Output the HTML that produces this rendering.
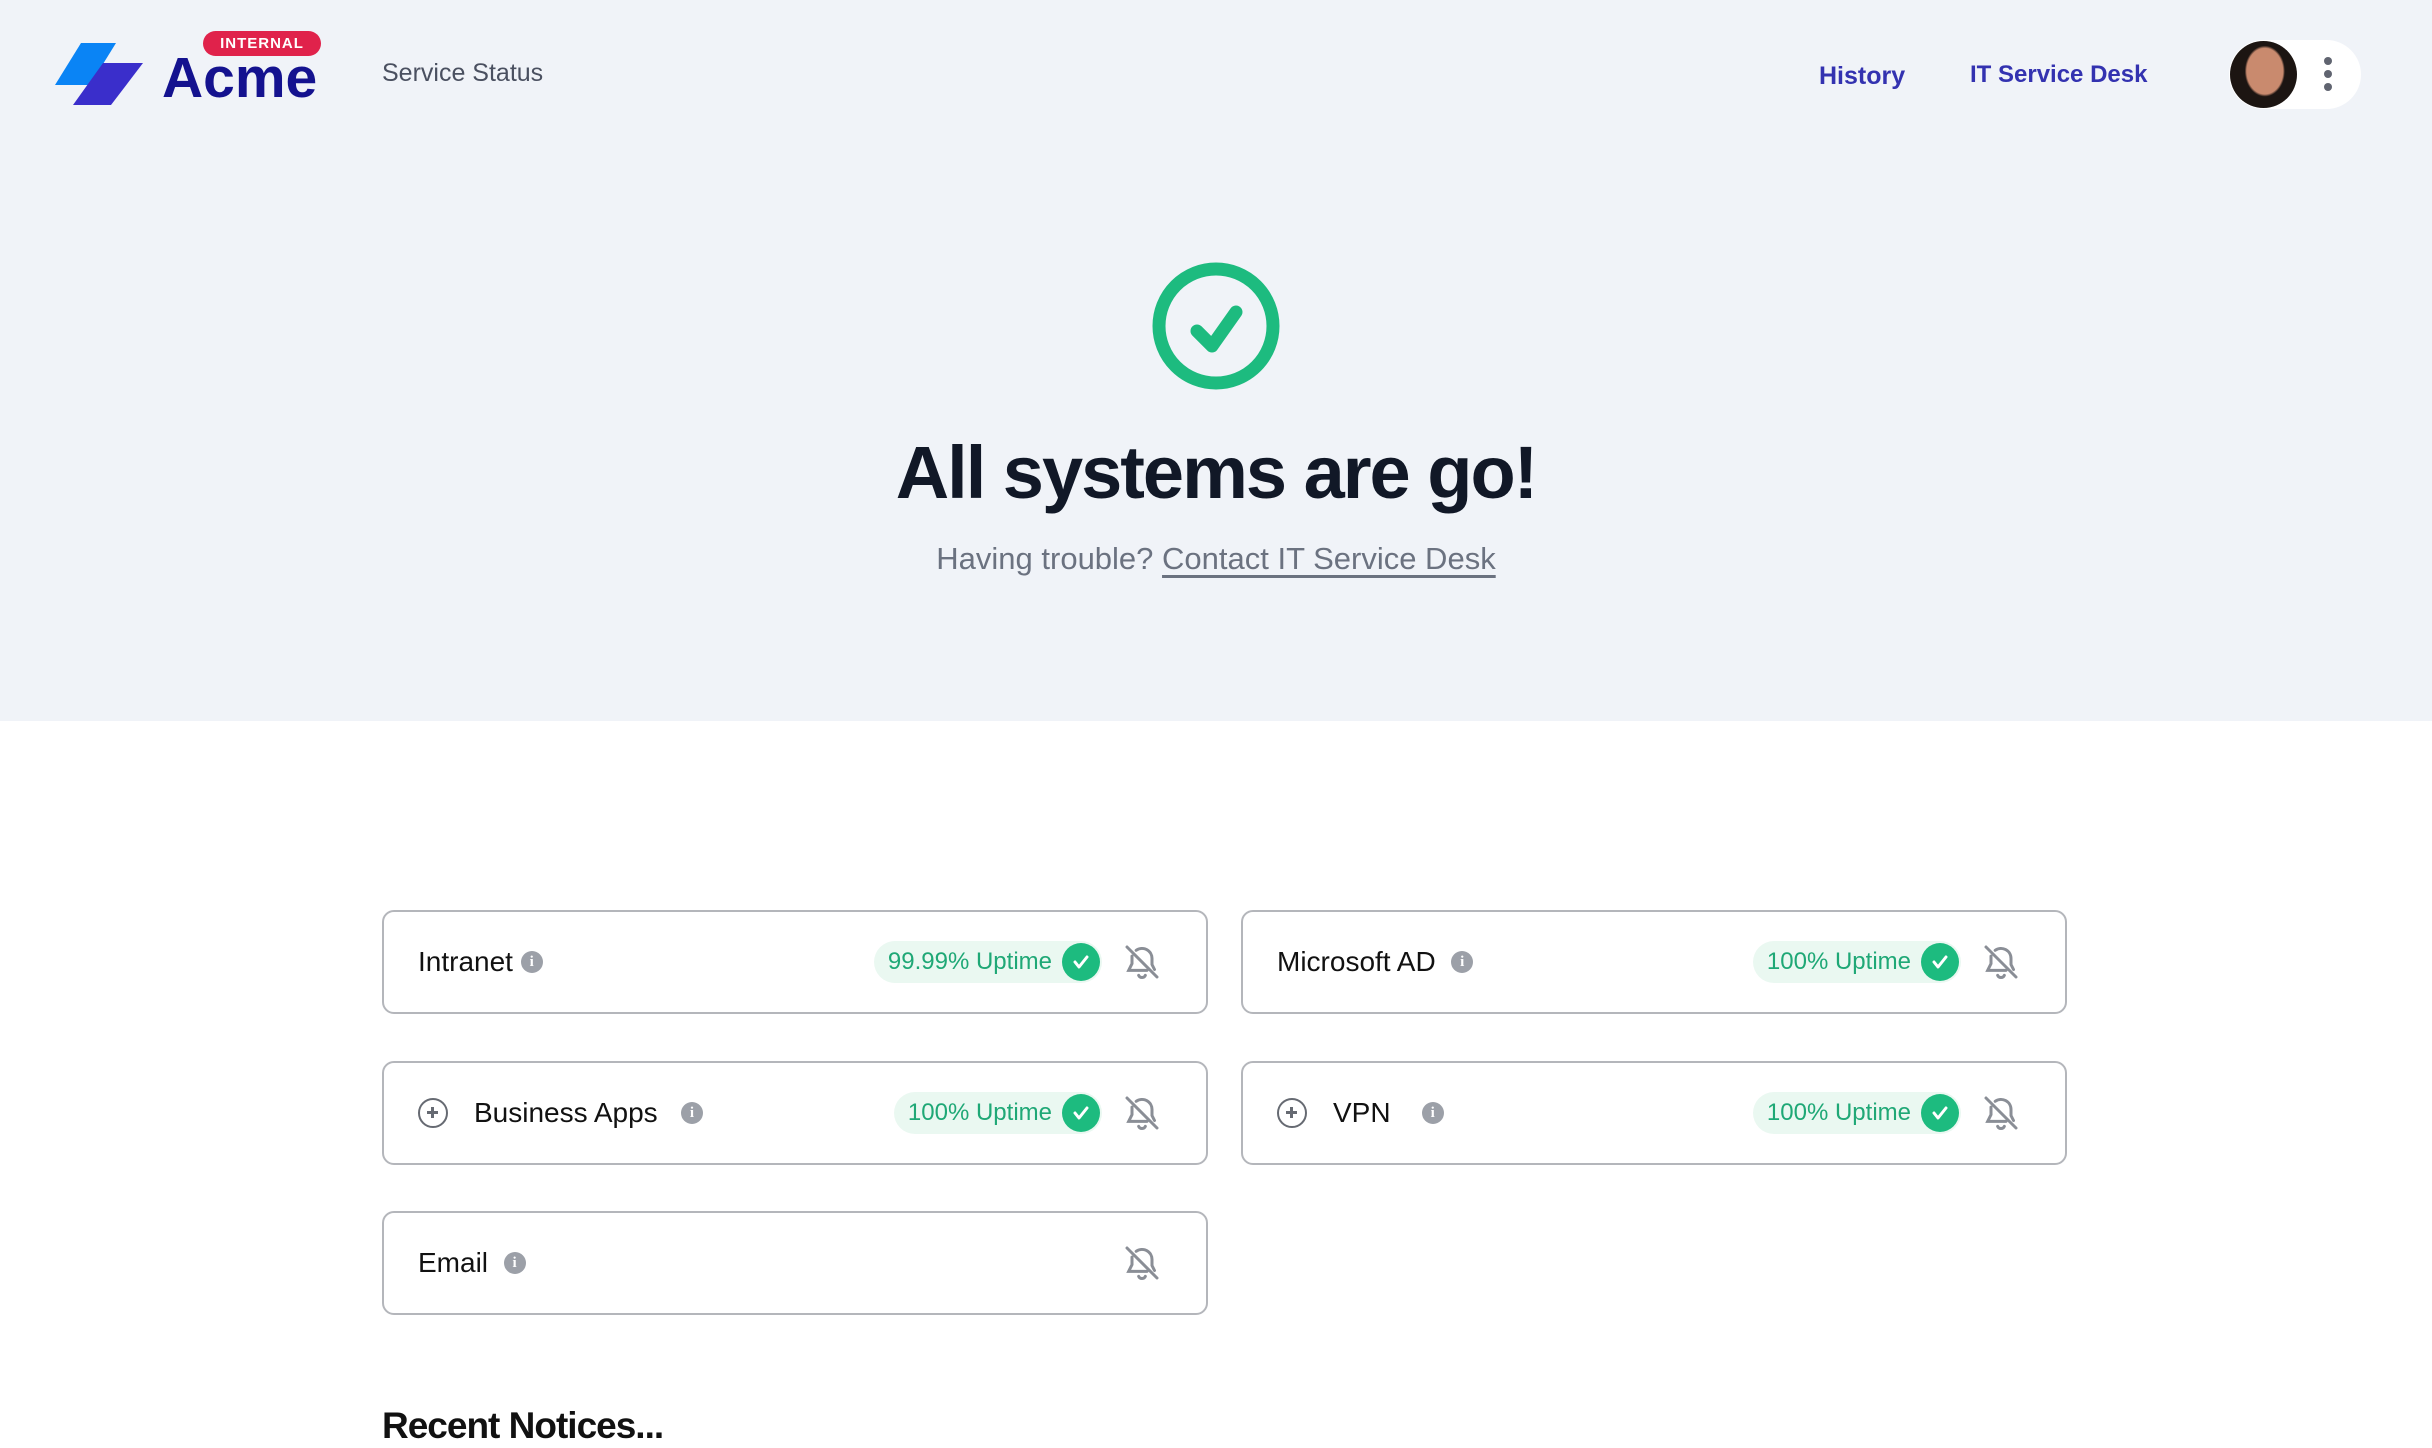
<!DOCTYPE html>
<html><head><meta charset="utf-8"><style>
*{margin:0;padding:0;box-sizing:border-box}
body{width:2432px;height:1448px;overflow:hidden;background:#fff;font-family:"Liberation Sans",sans-serif;position:relative}
.hero{position:absolute;left:0;top:0;width:2432px;height:721px;background:#f0f3f8}
.a{position:absolute}
.card{position:absolute;width:826px;height:104px;border:2px solid #b4b6bb;border-radius:12px;background:#fff}
.name{position:absolute;top:50%;transform:translateY(-50%);font-size:28px;color:#111;display:flex;align-items:center;white-space:nowrap}
.info{display:inline-block;width:22px;height:22px;border-radius:50%;background:#9ca0a8;color:#fff;font-size:15px;font-weight:bold;text-align:center;line-height:22px;font-family:"Liberation Serif",serif}
.pill{position:absolute;top:29px;height:42px;border-radius:21px;background:#eaf8f1;color:#1fa876;font-size:24px;line-height:42px;padding-left:14px;padding-right:50px;white-space:nowrap}
.pill .ck{position:absolute;right:2px;top:2px;width:38px;height:38px;border-radius:50%;background:#1dbb7f}
.bell{position:absolute;top:30px;right:44px;width:40px;height:40px}
.plus{display:inline-block;width:30px;height:30px;border:2.5px solid #666a72;border-radius:50%;position:relative;margin-right:26px}
.plus:before{content:"";position:absolute;left:7px;top:11px;width:11px;height:2.5px;background:#666a72}
.plus:after{content:"";position:absolute;left:11.3px;top:7px;width:2.5px;height:11px;background:#666a72}
</style></head><body>
<div class="hero"></div>
<svg class="a" style="left:0;top:0" width="160" height="120"><polygon points="81,43 116,43 90,85 55,85" fill="#0a84f5"/><polygon points="103,63 143,63 111,105 73,105" fill="#3a2ecb"/></svg>
<div class="a" style="left:203px;top:31px;width:118px;height:25px;border-radius:13px;background:#e0224b;color:#fff;font-size:15px;font-weight:bold;text-align:center;line-height:25px;letter-spacing:1px">INTERNAL</div>
<div class="a" style="left:162px;top:46px;font-size:57px;font-weight:bold;color:#14128f;line-height:64px">Acme</div>
<div class="a" style="left:382px;top:59px;font-size:25px;color:#4a5060">Service Status</div>
<div class="a" style="left:1819px;top:62px;font-size:25px;color:#3332b0;font-weight:bold">History</div>
<div class="a" style="left:1970px;top:61px;font-size:24px;color:#3332b0;font-weight:bold">IT Service Desk</div>
<div class="a" style="left:2229px;top:40px;width:132px;height:69px;border-radius:35px;background:#fff"></div>
<div class="a" style="left:2230px;top:41px;width:67px;height:67px;border-radius:50%;background:radial-gradient(ellipse 30% 38% at 52% 45%,#c98a6e 0 90%,#1c1512 100%)"></div>
<div class="a" style="left:2324px;top:57px;width:8px;height:8px;border-radius:50%;background:#606470;box-shadow:0 13px 0 #606470,0 26px 0 #606470"></div>
<svg class="a" style="left:1150px;top:260px" width="132" height="132" viewBox="0 0 132 132"><circle cx="66" cy="66" r="57" fill="none" stroke="#1dbb7f" stroke-width="13"/><polyline points="47,71 62,86 86,52" fill="none" stroke="#1dbb7f" stroke-width="13" stroke-linecap="round" stroke-linejoin="round"/></svg>
<div class="a" style="left:0;width:2432px;top:430px;text-align:center;font-size:74px;font-weight:bold;color:#111827;letter-spacing:-2px">All systems are go!</div>
<div class="a" style="left:0;width:2432px;top:541px;text-align:center;font-size:31px;color:#6b7280">Having trouble? <span style="text-decoration:underline;text-underline-offset:6px">Contact IT Service Desk</span></div>

<div class="card" style="left:382px;top:910px"><div class="name" style="left:34px">Intranet&nbsp;<span class="info">i</span></div><div class="pill" style="right:104px">99.99% Uptime<span class="ck"><svg width="38" height="38"><polyline points="13,19 17,24 25,14" fill="none" stroke="#fff" stroke-width="3" stroke-linecap="round" stroke-linejoin="round"/></svg></span></div><svg class="bell" viewBox="0 0 24 24" fill="none" stroke="#8a8e96" stroke-width="1.8" stroke-linecap="round"><path d="M8.5 5A6 6 0 0 1 18 10v3.5l1.5 3M6 8.5V13l-2 4h11M10 20a2.2 2.2 0 0 0 4 0M3 3l18 18"/></svg></div>
<div class="card" style="left:1241px;top:910px"><div class="name" style="left:34px">Microsoft AD&nbsp;&nbsp;<span class="info">i</span></div><div class="pill" style="right:104px">100% Uptime<span class="ck"><svg width="38" height="38"><polyline points="13,19 17,24 25,14" fill="none" stroke="#fff" stroke-width="3" stroke-linecap="round" stroke-linejoin="round"/></svg></span></div><svg class="bell" viewBox="0 0 24 24" fill="none" stroke="#8a8e96" stroke-width="1.8" stroke-linecap="round"><path d="M8.5 5A6 6 0 0 1 18 10v3.5l1.5 3M6 8.5V13l-2 4h11M10 20a2.2 2.2 0 0 0 4 0M3 3l18 18"/></svg></div>
<div class="card" style="left:382px;top:1061px"><div class="name" style="left:34px"><span class="plus"></span>Business Apps&nbsp;&nbsp;&nbsp;<span class="info">i</span></div><div class="pill" style="right:104px">100% Uptime<span class="ck"><svg width="38" height="38"><polyline points="13,19 17,24 25,14" fill="none" stroke="#fff" stroke-width="3" stroke-linecap="round" stroke-linejoin="round"/></svg></span></div><svg class="bell" viewBox="0 0 24 24" fill="none" stroke="#8a8e96" stroke-width="1.8" stroke-linecap="round"><path d="M8.5 5A6 6 0 0 1 18 10v3.5l1.5 3M6 8.5V13l-2 4h11M10 20a2.2 2.2 0 0 0 4 0M3 3l18 18"/></svg></div>
<div class="card" style="left:1241px;top:1061px"><div class="name" style="left:34px"><span class="plus"></span>VPN&nbsp;&nbsp;&nbsp;&nbsp;<span class="info">i</span></div><div class="pill" style="right:104px">100% Uptime<span class="ck"><svg width="38" height="38"><polyline points="13,19 17,24 25,14" fill="none" stroke="#fff" stroke-width="3" stroke-linecap="round" stroke-linejoin="round"/></svg></span></div><svg class="bell" viewBox="0 0 24 24" fill="none" stroke="#8a8e96" stroke-width="1.8" stroke-linecap="round"><path d="M8.5 5A6 6 0 0 1 18 10v3.5l1.5 3M6 8.5V13l-2 4h11M10 20a2.2 2.2 0 0 0 4 0M3 3l18 18"/></svg></div>
<div class="card" style="left:382px;top:1211px"><div class="name" style="left:34px">Email&nbsp;&nbsp;<span class="info">i</span></div><svg class="bell" viewBox="0 0 24 24" fill="none" stroke="#8a8e96" stroke-width="1.8" stroke-linecap="round"><path d="M8.5 5A6 6 0 0 1 18 10v3.5l1.5 3M6 8.5V13l-2 4h11M10 20a2.2 2.2 0 0 0 4 0M3 3l18 18"/></svg></div>
<div class="a" style="left:382px;top:1405px;font-size:37px;font-weight:bold;color:#111;letter-spacing:-1px">Recent Notices...</div>
</body></html>
